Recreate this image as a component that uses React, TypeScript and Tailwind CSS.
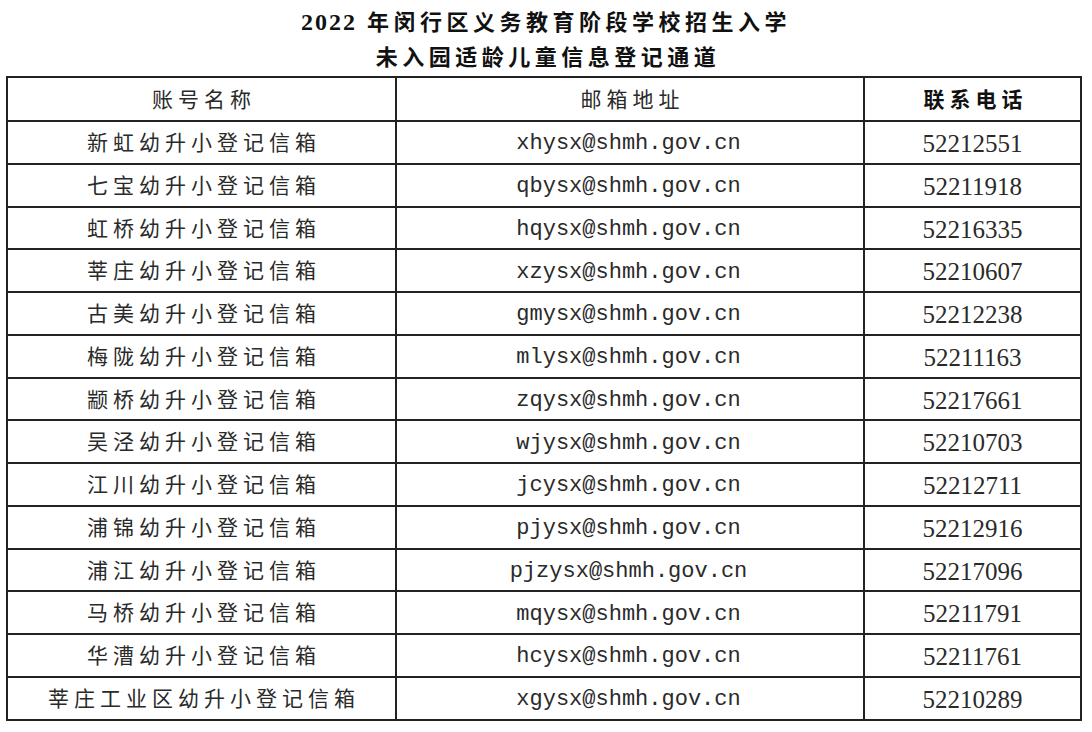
import React from "react";

const rows: [string, string, string][] = [
  ["新虹幼升小登记信箱", "xhysx@shmh.gov.cn", "52212551"],
  ["七宝幼升小登记信箱", "qbysx@shmh.gov.cn", "52211918"],
  ["虹桥幼升小登记信箱", "hqysx@shmh.gov.cn", "52216335"],
  ["莘庄幼升小登记信箱", "xzysx@shmh.gov.cn", "52210607"],
  ["古美幼升小登记信箱", "gmysx@shmh.gov.cn", "52212238"],
  ["梅陇幼升小登记信箱", "mlysx@shmh.gov.cn", "52211163"],
  ["颛桥幼升小登记信箱", "zqysx@shmh.gov.cn", "52217661"],
  ["吴泾幼升小登记信箱", "wjysx@shmh.gov.cn", "52210703"],
  ["江川幼升小登记信箱", "jcysx@shmh.gov.cn", "52212711"],
  ["浦锦幼升小登记信箱", "pjysx@shmh.gov.cn", "52212916"],
  ["浦江幼升小登记信箱", "pjzysx@shmh.gov.cn", "52217096"],
  ["马桥幼升小登记信箱", "mqysx@shmh.gov.cn", "52211791"],
  ["华漕幼升小登记信箱", "hcysx@shmh.gov.cn", "52211761"],
  ["莘庄工业区幼升小登记信箱", "xgysx@shmh.gov.cn", "52210289"],
];

export default function App() {
  return (
    <div className="w-[1092px] h-[732px] bg-white overflow-hidden">
      <div
        className="pt-[5px] text-center font-bold text-[22px] leading-[35px] text-[#111]"
        style={{ fontFamily: "'Liberation Serif','Noto Sans CJK SC',serif" }}
      >
        <div>
          <span className="text-[24px] tracking-[2px]">2022</span>
          <span className="tracking-[4.5px]"> 年闵行区义务教育阶段学校招生入学</span>
        </div>
        <div className="tracking-[4.5px] pl-[4px]">未入园适龄儿童信息登记通道</div>
      </div>
      <div
        className="mt-[1px] ml-[6px] w-[1076px] border-2 border-[#222] text-[#2a2a2a]"
        style={{ fontFamily: "'Liberation Serif','Noto Sans CJK SC',serif" }}
      >
        <div className="grid grid-cols-[387px_468px_217px] h-[42px]">
          <div className="flex items-center justify-center pt-[3px] text-[21px] tracking-[5px] pl-[5px]">
            账号名称
          </div>
          <div className="flex items-center justify-center pt-[3px] border-l-2 border-[#222] text-[21px] tracking-[5px] pl-[5px]">
            邮箱地址
          </div>
          <div className="flex items-center justify-center pt-[3px] border-l-2 border-[#222] text-[21px] tracking-[5px] pl-[6px] font-bold text-[#111]">
            联系电话
          </div>
        </div>
        {rows.map(([name, mail, tel]) => (
          <div
            key={name}
            className="grid grid-cols-[387px_468px_217px] h-[42.75px] border-t-2 border-[#222]"
          >
            <div className="flex items-center justify-center pt-[3px] text-[21px] tracking-[5px] pl-[5px]">
              {name}
            </div>
            <div
              className="flex items-center justify-center pt-[3px] border-l-2 border-[#222] text-[22px] pr-[3px]"
              style={{ fontFamily: "'Liberation Mono',monospace" }}
            >
              {mail}
            </div>
            <div
              className="flex items-center justify-center pt-[3px] border-l-2 border-[#222] text-[25px]"
              style={{ fontFamily: "'Liberation Serif',serif" }}
            >
              {tel}
            </div>
          </div>
        ))}
      </div>
    </div>
  );
}
